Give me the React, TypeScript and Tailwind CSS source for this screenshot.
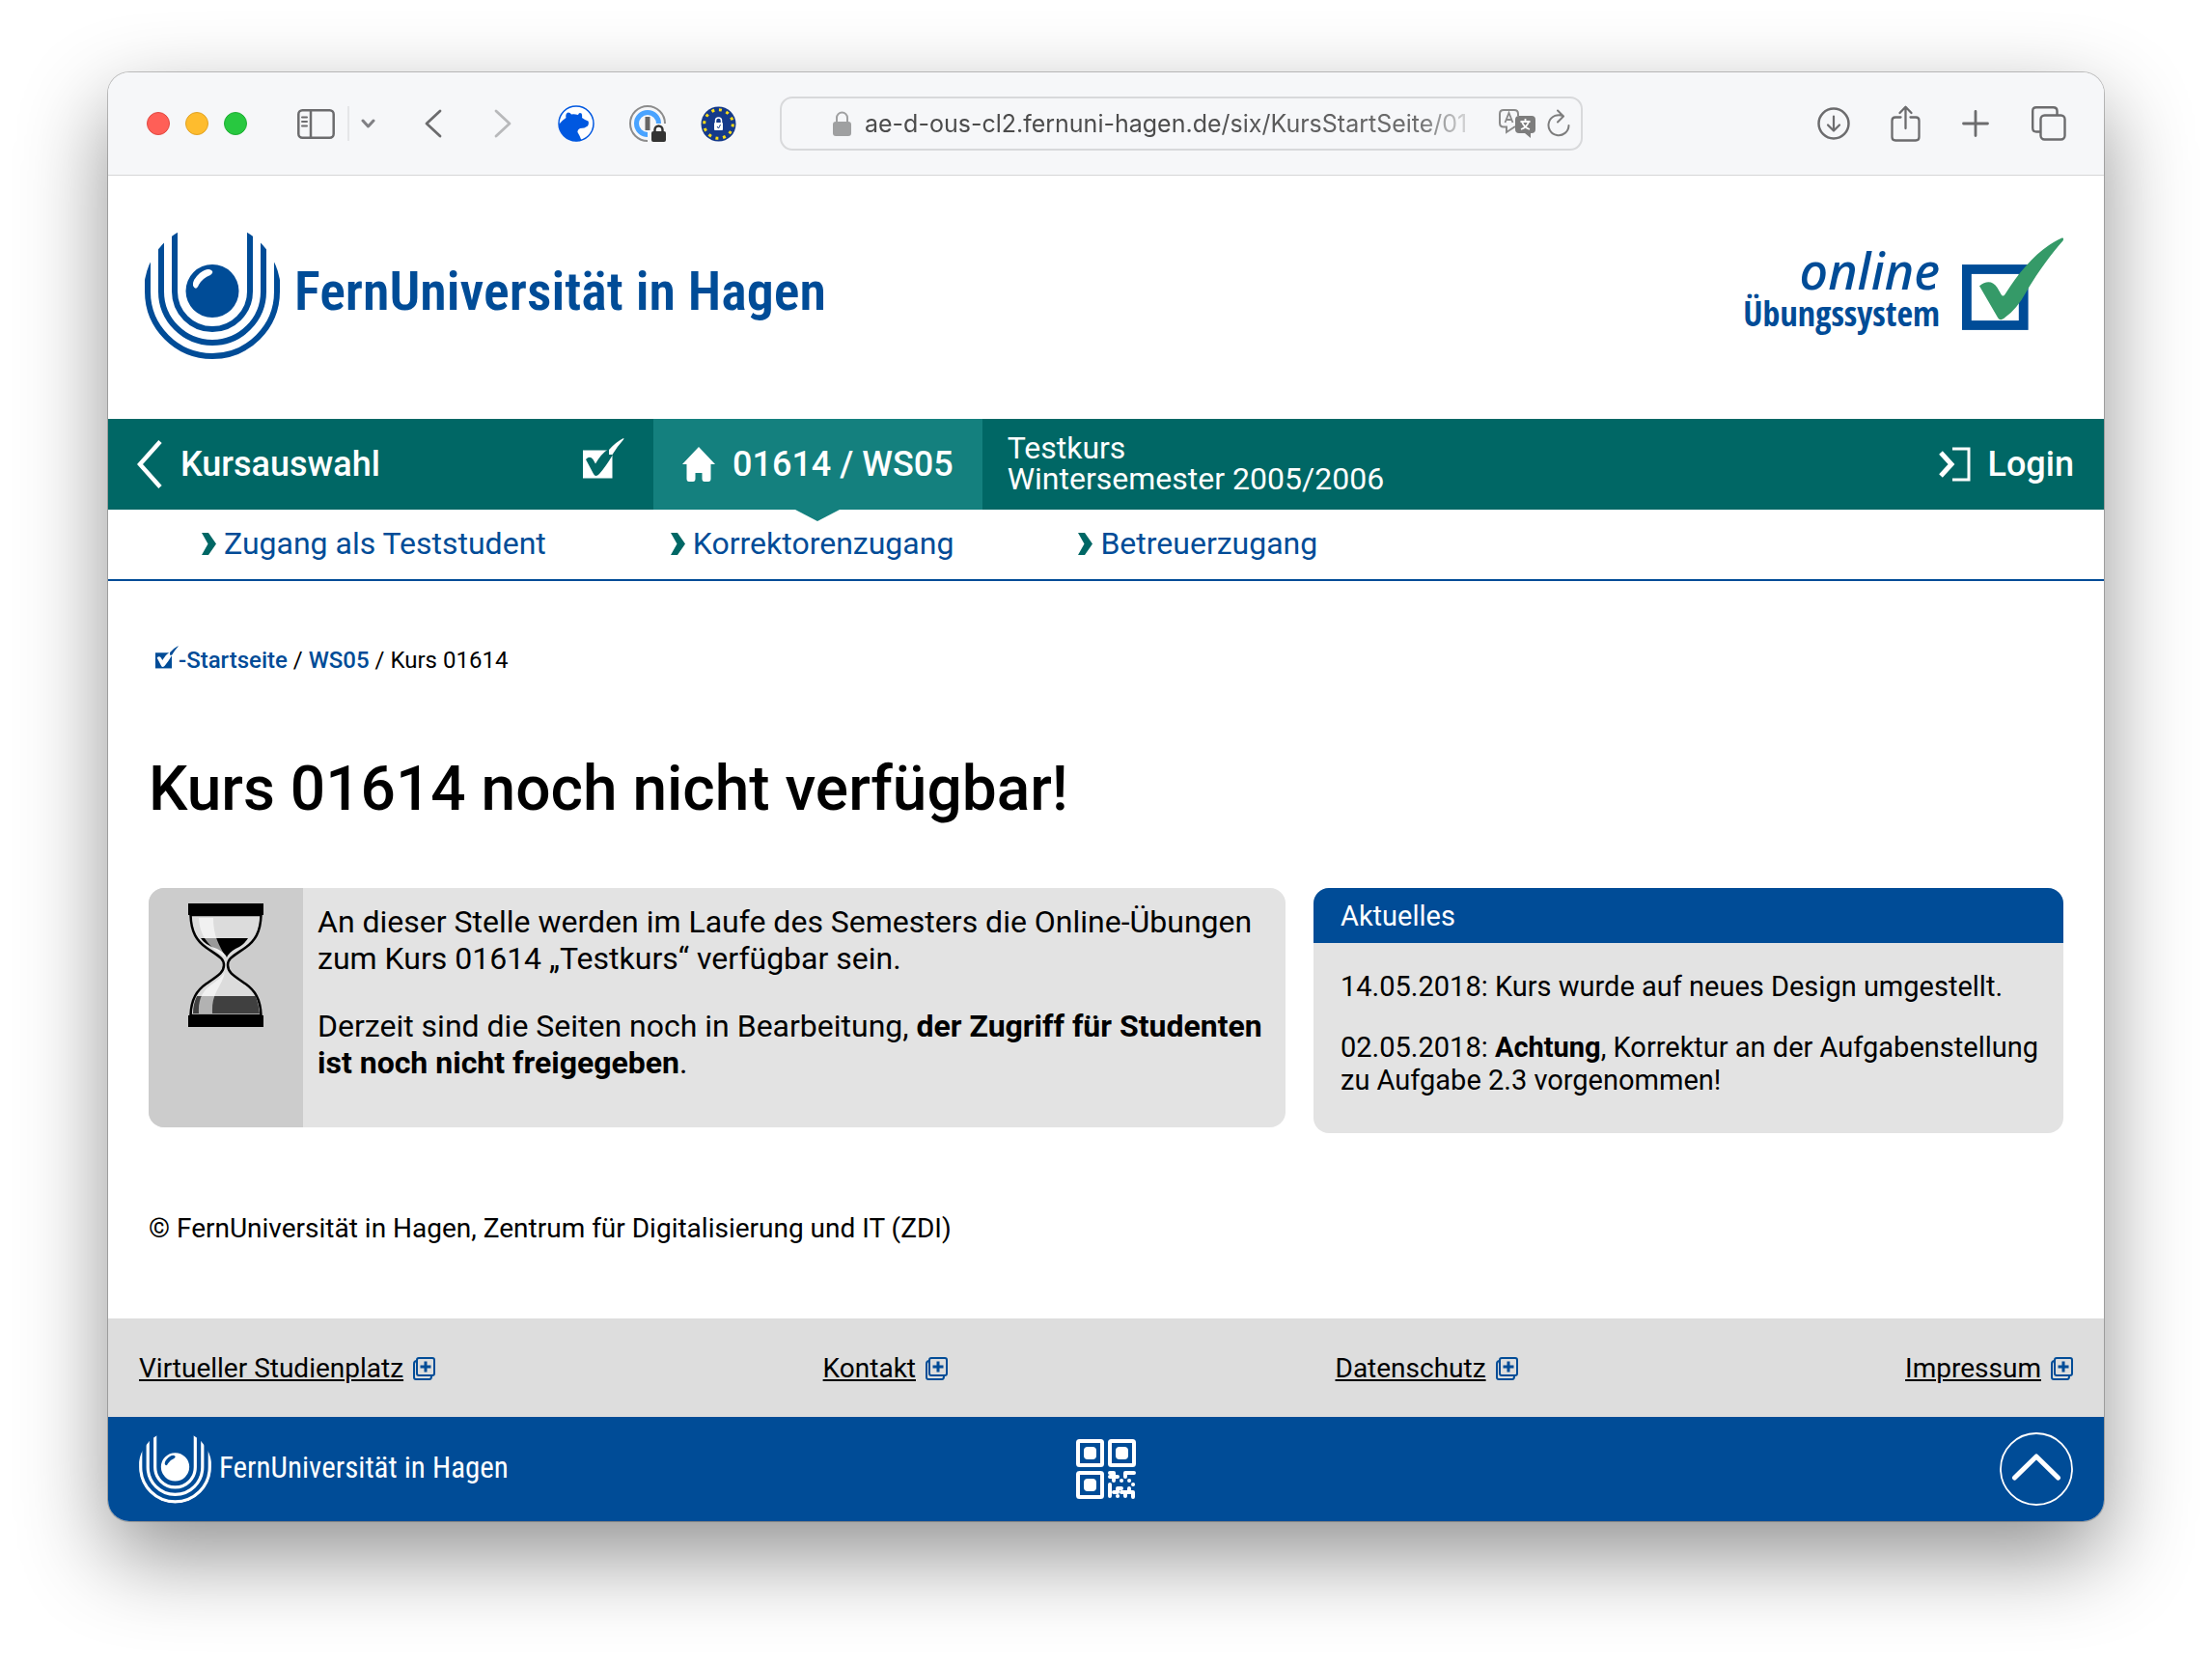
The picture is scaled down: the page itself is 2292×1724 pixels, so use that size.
import { ReactNode } from "react"

const subLinks = ["Zugang als Teststudent", "Korrektorenzugang", "Betreuerzugang"]
const footerLinks = ["Virtueller Studienplatz", "Kontakt", "Datenschutz", "Impressum"]

const FernUniMark = ({ className }: { className: string }) => (
  <svg className={className} viewBox="0 0 140 133" fill="currentColor" aria-hidden="true">
    <defs>
      <clipPath id="mark-clip">
        <circle cx="70" cy="62" r="71" />
      </clipPath>
    </defs>
    <g clipPath="url(#mark-clip)" fill="none" stroke="currentColor" strokeWidth="6">
      <path d="M31 -10V62A39 39 0 0 0 109 62V-10" />
      <path d="M17 -10V62A53 53 0 0 0 123 62V-10" />
      <path d="M3 -10V62A67 67 0 0 0 137 62V-10" />
    </g>
    <path
      fillRule="evenodd"
      d="M70 34A27.500 27.500 0 1 1 70 89A27.500 27.500 0 1 1 70 34ZM50 56Q53 62 56 55Q60 48 68 45Q72 42 69 40Q65 37 57 43Q49 50 50 56Z"
    />
  </svg>
)

const CheckLogo = () => (
  <svg className="h-[97px] w-[106px]" viewBox="0 0 106 97" aria-hidden="true">
    <rect x="4.900" y="33" width="58.800" height="58" fill="white" stroke="#004c97" strokeWidth="9.800" />
    <path
      fill="#359a68"
      d="M18 50.300C25 44.500 32 45 36.500 52L40.500 59Q42.300 62 44.500 59C62 31 82 10 103.500 .500Q106 0 104.500 3.500C88 22 75 42 66.500 56.500Q57 74 45 82.500C41 86 39 86 37 83Z"
    />
  </svg>
)

const CheckIcon = ({ className, mark }: { className: string; mark: string }) => (
  <svg className={className} viewBox="0 0 43 42" fill="currentColor" aria-hidden="true">
    <path d="M0 12.500H30.500V41.500H0Z" />
    <path
      fill={mark}
      d="M3 22Q7 17.500 10.500 22L13 26.500Q19 16 26 11.500L31 12V17Q24 29 17 37Q13 41 11 37Z"
    />
    <path d="M27 12Q34 4 42 0Q43 0 42 1.500Q36 8 30.500 17L27 17Z" />
  </svg>
)

const Hourglass = () => (
  <svg className="h-[128px] w-[78px]" viewBox="0 0 78 128" aria-hidden="true">
    <path
      d="M2.500 12C3 30 9 39 19 46C32 55 37 57 37 64C37 71 32 74 19 83C9 90 3 99 2.500 116H75.500C75 99 69 90 59 83C46 74 41 71 41 64C41 57 46 55 59 46C69 39 75 30 75.500 12Z"
      fill="#dcdcdc"
      stroke="black"
      strokeWidth="2.500"
    />
    <path d="M13 36H62Q57 44 49 47Q42 51 40 56Q38 51 30 47Q17 43 13 36Z" fill="black" />
    <path d="M9 96H70Q73 104 74 114H5Q5 104 9 96Z" fill="#404040" />
    <path d="M11 15H26C26 34 32 43 39 56C26 47 12 38 11 15Z" fill="white" opacity=".6" />
    <path d="M38 71C35 87 24 91 25 114H11C10 98 16 90 24 84Q36 76 38 71Z" fill="white" opacity=".6" />
    <path d="M0 0H78V12H0ZM0 116H78V128H0Z" />
  </svg>
)

const ExternalIcon = () => (
  <svg className="h-[24px] w-[23px]" viewBox="0 0 23 24" fill="none" stroke="#004c97" strokeWidth="2" aria-hidden="true">
    <path d="M4 4Q1 4 1 7V21Q1 23 3 23H17Q19 23 19 20" />
    <rect x="4" y="1" width="18" height="18" rx="2" fill="#dddddd" />
    <path d="M13 4.500V15.500M7.500 10H18.500" strokeWidth="3" />
  </svg>
)

const QrIcon = () => (
  <svg className="h-[62px] w-[62px]" viewBox="0 0 62 62" fill="white" aria-hidden="true">
    <g fill="none" stroke="white" strokeWidth="4">
      <rect x="2" y="2" width="25" height="25" rx="1.500" />
      <rect x="35" y="2" width="25" height="25" rx="1.500" />
      <rect x="2" y="35" width="25" height="25" rx="1.500" />
    </g>
    <rect x="8" y="8" width="13" height="13" rx="4" />
    <rect x="41" y="8" width="13" height="13" rx="4" />
    <rect x="8" y="41" width="13" height="13" rx="4" />
    <g stroke="white" strokeWidth="4" strokeLinecap="round" strokeLinejoin="round" fill="none">
      <path d="M35 35H39V43M35 39H43M51 39V35H60M47 43H47.100M55 43H55.100M59 47H59.100" />
      <path d="M35 47V59M39 55H43V51H47M51 55H55V51M47 55H51V59M55 55H59V60M43 59H43.100" />
    </g>
  </svg>
)

const ToolButton = ({ label, className, children }: { label: string; className?: string; children: ReactNode }) => (
  <button type="button" aria-label={label} className={`shrink-0 ${className ?? ""}`}>
    {children}
  </button>
)

const BrowserToolbar = () => (
  <div className="flex items-center border-b border-[#d5d6d7] bg-[#f6f7f9] pb-[25px] pl-10 pr-[39px] pt-[25px] text-[#6c6c6e]">
    <div className="flex gap-4">
      <span className="size-6 rounded-full border border-[#e14942] bg-[#ff5f57]" />
      <span className="size-6 rounded-full border border-[#e1a325] bg-[#febc2e]" />
      <span className="size-6 rounded-full border border-[#1fad34] bg-[#28c840]" />
    </div>
    <ToolButton label="Seitenleiste" className="ml-[52px]">
      <svg className="h-[31px] w-[39px]" viewBox="0 0 39 31" fill="none" stroke="currentColor" strokeWidth="2.500">
        <rect x="1.300" y="1.300" width="36.400" height="28.400" rx="4" />
        <path d="M14 1V30" />
        <path d="M5 8.500H10M5 13H10M5 17.500H10" strokeWidth="2" strokeLinecap="round" />
      </svg>
    </ToolButton>
    <span className="ml-[13px] h-9 w-[2px] bg-[#e5e6e8]" />
    <ToolButton label="Tabgruppen" className="ml-[12px]">
      <svg className="h-[10px] w-[15px]" viewBox="0 0 15 10" fill="none" stroke="#808084" strokeWidth="3" strokeLinecap="round" strokeLinejoin="round">
        <path d="M2 2L7.500 8L13 2" />
      </svg>
    </ToolButton>
    <ToolButton label="Zurück" className="ml-[51px]">
      <svg className="h-[30px] w-[18px]" viewBox="0 0 18 30" fill="none" stroke="currentColor" strokeWidth="2.800" strokeLinecap="round" strokeLinejoin="round">
        <path d="M16 2L2 15L16 28" />
      </svg>
    </ToolButton>
    <ToolButton label="Vorwärts" className="ml-[54px]">
      <svg className="h-[30px] w-[18px]" viewBox="0 0 18 30" fill="none" stroke="#b8b9bb" strokeWidth="2.800" strokeLinecap="round" strokeLinejoin="round">
        <path d="M2 2L16 15L2 28" />
      </svg>
    </ToolButton>
    <ToolButton label="Bear" className="ml-[48px]">
      <svg className="size-[38px]" viewBox="0 0 38 38">
        <circle cx="19" cy="19" r="18" fill="white" stroke="#0058e0" strokeWidth="1.500" />
        <path
          fill="#0058e0"
          d="M1 20Q4 16 8.500 13Q7.500 8.500 10.500 7.500Q13 7.500 14 9.500Q17 9 21 10Q22 7 24.500 8.500Q25.500 10 25 13Q28 15 31.500 16.500Q32.500 19 31 21.500Q28 24 23 24Q20 25.500 20.500 28Q23 32 24.500 36.500Q16 39 9 34Q2 29 1 20Z"
        />
      </svg>
    </ToolButton>
    <ToolButton label="1Password" className="ml-9">
      <svg className="size-[38px]" viewBox="0 0 38 38" fill="none">
        <path d="M19 37A18 18 0 1 1 37 19" stroke="#8c8c8c" strokeWidth="2" />
        <path d="M19 30.500A11.500 11.500 0 1 1 30.500 19" stroke="#49a3ff" strokeWidth="5" />
        <rect x="16.500" y="12" width="5" height="14" fill="#666666" />
        <rect x="23" y="27" width="15" height="11" rx="2" fill="#333333" />
        <path d="M26.500 28V25.500A4 4 0 0 1 34.500 25.500V28" stroke="#333333" strokeWidth="2.500" />
      </svg>
    </ToolButton>
    <ToolButton label="Datenschutz-Erweiterung" className="ml-9">
      <svg className="size-[37px]" viewBox="0 0 37 37" fill="none">
        <circle cx="18.500" cy="18.500" r="18" fill="#153a8a" />
        <circle cx="18.500" cy="18.500" r="14.800" stroke="#ffdd15" strokeWidth="3" strokeDasharray="3 4.749" />
        <rect x="14" y="17" width="9" height="8" rx="1" fill="white" />
        <path d="M15.500 17V15A3 3 0 0 1 21.500 15V17" stroke="white" strokeWidth="1.500" />
        <path d="M17 21L18.500 23L20.500 19" stroke="#153a8a" />
      </svg>
    </ToolButton>
    <div className="ml-[45px] flex h-[56px] w-[832px] shrink items-center rounded-[13px] border-2 border-[#d8d9db] pl-[53px] pr-[10px]">
      <svg className="h-[26px] w-[19px] shrink-0" viewBox="0 0 19 26" fill="none" aria-hidden="true">
        <rect y="11" width="19" height="15" rx="3" fill="#9fa0a1" />
        <path d="M4 12V7A5.500 5.500 0 0 1 15 7V12" stroke="#9fa0a1" strokeWidth="2" />
      </svg>
      <input
        type="text"
        readOnly
        aria-label="Adresse"
        value="ae-d-ous-cl2.fernuni-hagen.de/six/KursStartSeite/01"
        className="ml-[14px] min-w-0 flex-1 bg-transparent pt-0.5 font-['Inter',sans-serif] text-[25px] text-[#4c4c4c] outline-none [mask-image:linear-gradient(to_right,black_50%,rgba(0,0,0,.8)_90%,transparent)]"
      />
      <svg className="ml-[18px] h-[30px] w-[38px] shrink-0" viewBox="0 0 38 30" fill="none" aria-label="Übersetzen">
        <path d="M17 18L8 24V18.500H5Q1 18.500 1 14.500V5Q1 1 5 1H16Q20 1 20 5V7" stroke="#8a8a8a" strokeWidth="2" />
        <path d="M6.500 14L10.500 4L14.500 14M8 11H13" stroke="#8a8a8a" strokeWidth="1.800" />
        <path d="M21 7H34Q38 7 38 11V21Q38 25 34 25H33V30L27 25H21Q17 25 17 21V11Q17 7 21 7Z" fill="#7d7d7d" />
        <path d="M27.500 10V13M22.500 13H32.500M24 13Q26 19 32 21M31 13Q29 19 23 21" stroke="white" strokeWidth="1.800" />
      </svg>
      <ToolButton label="Neu laden" className="ml-[12px]">
        <svg className="h-[30px] w-[25px]" viewBox="0 0 25 30" fill="none" stroke="#7d7d7d" strokeWidth="2" strokeLinecap="round" strokeLinejoin="round">
          <path d="M17 7.500A10.500 10.500 0 1 0 22.500 17M11 1.500L17 7.500L11 13.500" />
        </svg>
      </ToolButton>
    </div>
    <div className="ml-auto flex items-center">
      <ToolButton label="Downloads">
        <svg className="size-[34px]" viewBox="0 0 34 34" fill="none" stroke="currentColor" strokeWidth="2.500" strokeLinecap="round" strokeLinejoin="round">
          <circle cx="17" cy="17" r="15.500" />
          <path d="M17 9.500V24M11 18.500L17 24.500L23 18.500" strokeWidth="2.200" />
        </svg>
      </ToolButton>
      <ToolButton label="Teilen" className="ml-[42px]">
        <svg className="h-[38px] w-[31px]" viewBox="0 0 31 38" fill="none" stroke="currentColor" strokeWidth="2.300" strokeLinecap="round" strokeLinejoin="round">
          <path d="M10.500 12.500H5Q1.500 12.500 1.500 16V33Q1.500 36.500 5 36.500H26Q29.500 36.500 29.500 33V16Q29.500 12.500 26 12.500H20.500" />
          <path d="M15.500 24V2M9.500 8L15.500 1.800L21.500 8" />
        </svg>
      </ToolButton>
      <ToolButton label="Neuer Tab" className="ml-[43px]">
        <svg className="size-[28px]" viewBox="0 0 28 28" fill="none" stroke="currentColor" strokeWidth="2.800" strokeLinecap="round">
          <path d="M14 1.500V26.500M1.500 14H26.500" />
        </svg>
      </ToolButton>
      <ToolButton label="Tabübersicht" className="ml-[44px]">
        <svg className="size-[36px]" viewBox="0 0 36 36" fill="none" stroke="currentColor" strokeWidth="2.400">
          <rect x="9.500" y="9.500" width="25" height="25" rx="4" />
          <path d="M9.500 26.500H5Q1.200 26.500 1.200 22.500V5Q1.200 1.200 5 1.200H22.500Q26.500 1.200 26.500 5V9" />
        </svg>
      </ToolButton>
    </div>
  </div>
)

const PageHeader = () => (
  <header className="flex items-start justify-between pb-[61px] pl-[38px] pr-[41px] pt-[58px] text-[#004c97]">
    <a href="#" className="flex items-center">
      <FernUniMark className="h-[133px] w-[140px]" />
      <span className="ml-[15px] whitespace-nowrap pb-2.5 font-['Roboto_Condensed',Roboto,sans-serif] text-[56px] font-semibold leading-none">
        FernUniversität in Hagen
      </span>
    </a>
    <a href="#" className="flex items-start gap-[23px] pt-1.5">
      <span className="flex flex-col items-end pt-2 font-['Noto_Sans','Open_Sans',sans-serif]">
        <span className="text-[52px] font-medium italic leading-[52px]">online</span>
        <span className="font-['Open_Sans_Condensed','Roboto_Condensed',sans-serif] text-[36px] font-semibold leading-[38px]">
          Übungssystem
        </span>
      </span>
      <CheckLogo />
    </a>
  </header>
)

const MainNav = () => (
  <nav>
    <div className="flex items-stretch bg-[#006765] text-white">
      <a href="#" className="flex w-[565px] items-center py-5 pl-[30px] pr-[30px] text-[36px] font-medium leading-[42px]">
        <svg className="h-[50px] w-[26px]" viewBox="0 0 26 50" fill="none" stroke="white" strokeWidth="4.500" aria-hidden="true">
          <path d="M24 1.500L3 25L24 48.500" />
        </svg>
        <span className="ml-[19px]">Kursauswahl</span>
        <CheckIcon className="mb-3 ml-auto h-[42px] w-[43px]" mark="#006765" />
      </a>
      <a href="#" className="relative flex items-center bg-[#14807e] px-[30px] text-[36px] font-medium leading-[42px]">
        <svg className="h-[36px] w-[34px]" viewBox="0 0 34 36" fill="white" aria-hidden="true">
          <path d="M17 0L34 18H29.500V33Q29.500 36 27 36H23Q20.500 36 20.500 33V27H13.500V33Q13.500 36 11 36H7Q4.500 36 4.500 33V18H0Z" />
        </svg>
        <span className="ml-[18px]">01614 / WS05</span>
        <svg className="absolute left-1/2 top-full h-3 w-[46px] -translate-x-1/2" viewBox="0 0 46 12" aria-hidden="true">
          <path d="M0 0H46L23 12Z" fill="#14807e" />
        </svg>
      </a>
      <p className="self-center pb-0.5 pl-[26px] text-[32px] leading-8">
        Testkurs
        <br />
        Wintersemester 2005/2006
      </p>
      <a href="#" className="ml-auto flex items-center gap-[18px] pr-[31px] text-[36px] font-medium leading-[42px]">
        <svg className="h-[36px] w-[34px]" viewBox="0 0 34 36" fill="none" stroke="white" aria-hidden="true">
          <path d="M3 6L14 18L3 30" strokeWidth="5" />
          <path d="M15 2H32V34H15" strokeWidth="3" />
        </svg>
        Login
      </a>
    </div>
    <ul className="flex gap-[129px] border-b-2 border-[#004c97] pb-[18px] pl-[97px] pt-4 text-[32px] leading-[38px] text-[#004c97]">
      {subLinks.map((link) => (
        <li key={link}>
          <a href="#" className="flex items-center gap-2">
            <svg className="h-[23px] w-[15px]" viewBox="0 0 15 23" fill="#006765" aria-hidden="true">
              <path d="M0 0H7L15 11.500L7 23H0L6.500 11.500Z" />
            </svg>
            {link}
          </a>
        </li>
      ))}
    </ul>
  </nav>
)

const Content = () => (
  <main className="px-[42px] pb-[76px] pt-[67px] text-black">
    <div className="flex items-center whitespace-pre pl-[7px] text-[24px] leading-7">
      <a href="#" className="flex items-center font-medium text-[#004c97]">
        <CheckIcon className="mb-[5px] size-6" mark="white" />
        <span>-Startseite</span>
      </a>
      <span> / </span>
      <a href="#" className="font-medium text-[#004c97]">WS05</a>
      <span> / Kurs 01614</span>
    </div>
    <h1 className="mt-[82px] text-[64px] font-medium leading-[76px]">Kurs 01614 noch nicht verfügbar!</h1>
    <div className="mt-16 flex items-start gap-[29px]">
      <section className="flex min-w-0 flex-1 overflow-hidden rounded-2xl bg-[#e3e3e3]">
        <div className="flex w-[160px] shrink-0 justify-center bg-[#cccccc] pt-4">
          <Hourglass />
        </div>
        <div className="flex flex-col gap-8 px-[15px] pb-12 pt-4 text-[32px] leading-[38px]">
          <p>An dieser Stelle werden im Laufe des Semesters die Online-Übungen zum Kurs 01614 „Testkurs“ verfügbar sein.</p>
          <p>
            Derzeit sind die Seiten noch in Bearbeitung, <b>der Zugriff für Studenten ist noch nicht freigegeben</b>.
          </p>
        </div>
      </section>
      <section className="w-[777px] shrink-0 overflow-hidden rounded-2xl bg-[#e3e3e3] text-[29px] leading-[34px]">
        <h2 className="bg-[#004c97] px-7 pb-[11px] pt-3 text-white">Aktuelles</h2>
        <div className="flex flex-col gap-[29px] pb-[38px] pl-7 pr-5 pt-7">
          <p>14.05.2018: Kurs wurde auf neues Design umgestellt.</p>
          <p>
            02.05.2018: <b>Achtung</b>, Korrektur an der Aufgabenstellung zu Aufgabe 2.3 vorgenommen!
          </p>
        </div>
      </section>
    </div>
    <p className="mt-[82px] text-[28px] leading-[34px]">© FernUniversität in Hagen, Zentrum für Digitalisierung und IT (ZDI)</p>
  </main>
)

const PageFooter = () => (
  <footer>
    <ul className="flex justify-between bg-[#dddddd] px-8 pb-[33px] pt-[35px] text-[28px] leading-[34px] text-black">
      {footerLinks.map((link) => (
        <li key={link}>
          <a href="#" className="flex items-center gap-[10px]">
            <span className="underline decoration-2 underline-offset-2">{link}</span>
            <ExternalIcon />
          </a>
        </li>
      ))}
    </ul>
    <div className="grid grid-cols-3 items-center bg-[#004c97] px-8 py-4 text-white">
      <a href="#" className="flex items-center">
        <FernUniMark className="h-[71px] w-[75px]" />
        <span className="ml-2 whitespace-nowrap pb-1 font-['Roboto_Condensed',Roboto,sans-serif] text-[31px] leading-none">
          FernUniversität in Hagen
        </span>
      </a>
      <button type="button" aria-label="QR-Code anzeigen" className="justify-self-center">
        <QrIcon />
      </button>
      <button type="button" aria-label="Nach oben" className="justify-self-end">
        <svg className="size-[76px]" viewBox="0 0 76 76" fill="none" stroke="white">
          <circle cx="38" cy="38" r="37" strokeWidth="1.800" />
          <path d="M15.500 47L38 25L60.500 47" strokeWidth="5" strokeLinecap="round" strokeLinejoin="round" />
        </svg>
      </button>
    </div>
  </footer>
)

export default function App() {
  return (
    <div className="min-h-screen bg-white px-[112px] py-[75px] font-['Roboto',sans-serif]">
      <div className="overflow-hidden rounded-[22px] bg-white shadow-[0_0_0_1px_rgba(0,0,0,.22),0_36px_90px_rgba(0,0,0,.43)]">
        <BrowserToolbar />
        <PageHeader />
        <MainNav />
        <Content />
        <PageFooter />
      </div>
    </div>
  )
}
